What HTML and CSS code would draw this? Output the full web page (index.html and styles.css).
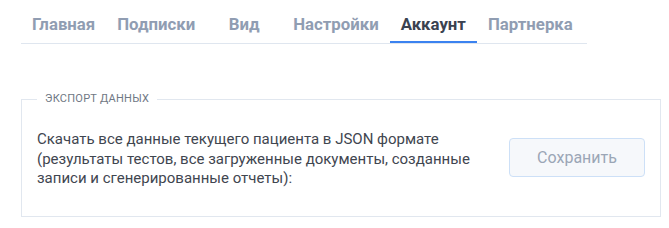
FILE: index.html
```html
<!DOCTYPE html>
<html lang="ru">
<head>
    <meta charset="UTF-8">
    <meta name="viewport" content="width=device-width, initial-scale=1.0">
    <title>Аккаунт</title>
    <link rel="stylesheet" href="styles.css">
</head>
<body>
    <nav class="tabs">
        <a class="tab" href="#">Главная</a>
        <a class="tab" href="#">Подписки</a>
        <a class="tab tab-wide" href="#">Вид</a>
        <a class="tab" href="#">Настройки</a>
        <a class="tab active" href="#">Аккаунт</a>
        <a class="tab" href="#">Партнерка</a>
    </nav>

    <fieldset class="export-box">
        <legend>Экспорт данных</legend>
        <div class="export-row">
            <p class="export-text">Скачать все данные текущего пациента в JSON формате (результаты тестов, все загруженные документы, созданные записи и сгенерированные отчеты):</p>
            <button class="save-button">Сохранить</button>
        </div>
    </fieldset>
</body>
</html>
```

FILE: styles.css
```css
body {
    margin: 0;
    padding: 0 8px 0 21px;
    font-family: Roboto, "Liberation Sans", sans-serif;
    background-color: #ffffff;
}

.tabs {
    display: flex;
    width: 566px;
    border-bottom: 1px solid #dfe6ef;
}

.tab {
    padding: 14px 11px 7px;
    font-size: 16.8px;
    line-height: 20px;
    font-weight: 700;
    color: #909db2;
    text-decoration: none;
    text-align: center;
    border-bottom: 2px solid transparent;
}

.tab-wide {
    min-width: 54px; /* Вид стоит шире остальных */
}

.tab.active {
    color: #3a4250;
    border-bottom-color: #3b82f0;
}

.export-box {
    margin: 48px 0 0;
    padding: 24px 15px 27px;
    border: 1px solid #e1e7ef;
    min-width: 0;
}

.export-box legend {
    padding: 0 8px;
    font-size: 11px;
    line-height: 14px;
    letter-spacing: 0.25px;
    text-transform: uppercase;
    color: #707884;
}

.export-row {
    display: flex;
    align-items: flex-start;
}

.export-text {
    flex: 1;
    margin: 0 24px 0 0;
    font-size: 15px;
    line-height: 19.5px;
    color: #3f4650;
}

.save-button {
    width: 136px;
    height: 39px;
    margin-top: 8px;
    font-family: inherit;
    font-size: 16px;
    color: #9ba6b6;
    background-color: #f6f8fb;
    border: 1px solid #cde0f7;
    border-radius: 4px;
    cursor: pointer;
}
```
